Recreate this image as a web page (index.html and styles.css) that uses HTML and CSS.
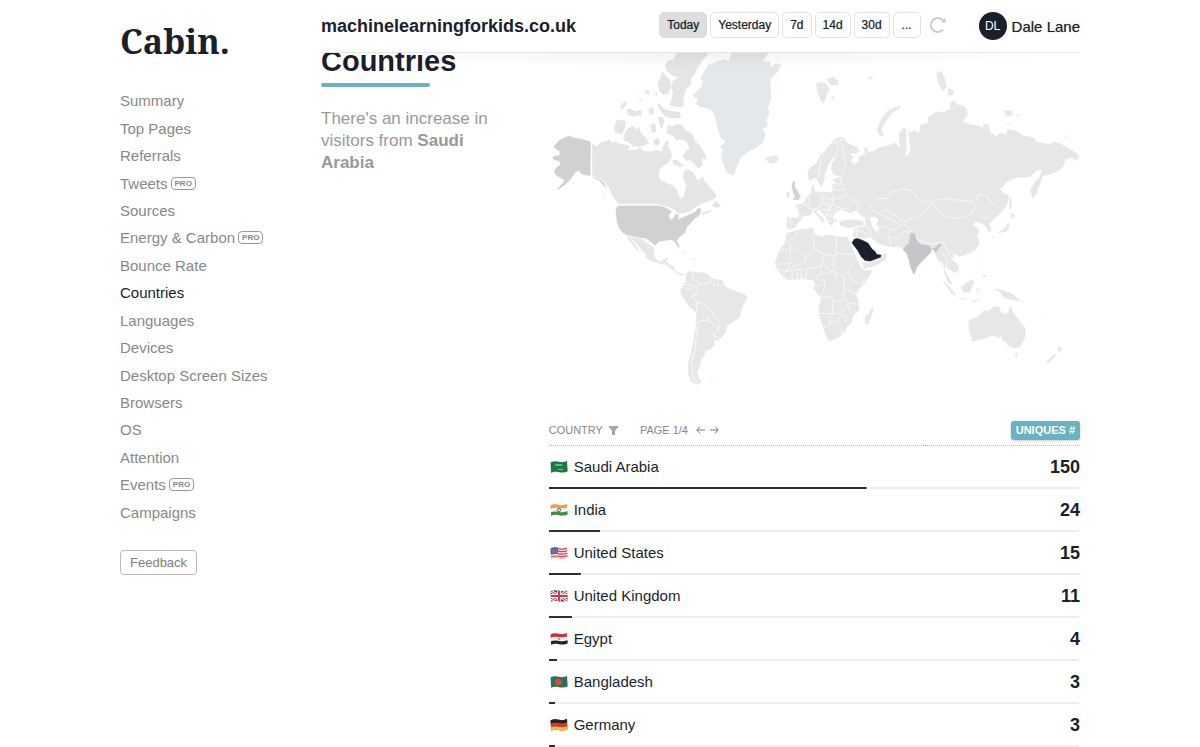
FILE: index.html
```html
<!DOCTYPE html>
<html lang="en">
<head>
<meta charset="utf-8">
<meta name="viewport" content="width=device-width, initial-scale=1">
<title>Cabin – machinelearningforkids.co.uk</title>
<link rel="stylesheet" href="styles.css">
</head>
<body>
<div class="page">
  <aside class="sidebar">
    <a class="logo" href="#">Cabin.</a>
    <nav>
      <ul class="nav-list">
        <li><a href="#">Summary</a></li>
        <li><a href="#">Top Pages</a></li>
        <li><a href="#">Referrals</a></li>
        <li><a href="#">Tweets</a><span class="pro">PRO</span></li>
        <li><a href="#">Sources</a></li>
        <li><a href="#">Energy &amp; Carbon</a><span class="pro">PRO</span></li>
        <li><a href="#">Bounce Rate</a></li>
        <li><a class="current" href="#">Countries</a></li>
        <li><a href="#">Languages</a></li>
        <li><a href="#">Devices</a></li>
        <li><a href="#">Desktop Screen Sizes</a></li>
        <li><a href="#">Browsers</a></li>
        <li><a href="#">OS</a></li>
        <li><a href="#">Attention</a></li>
        <li><a href="#">Events</a><span class="pro">PRO</span></li>
        <li><a href="#">Campaigns</a></li>
      </ul>
    </nav>
    <button class="feedback" type="button">Feedback</button>
  </aside>

  <main class="main">
    <header class="topbar">
      <h1 class="site">machinelearningforkids.co.uk</h1>
      <div class="periods">
        <button class="period active" type="button">Today</button>
        <button class="period" type="button">Yesterday</button>
        <button class="period" type="button">7d</button>
        <button class="period" type="button">14d</button>
        <button class="period" type="button">30d</button>
        <button class="period more" type="button">...</button>
        <button class="refresh" type="button" aria-label="Refresh">
          <svg width="18" height="18" viewBox="0 0 18 18" fill="none" stroke="#c8c8c8" stroke-width="1.800"><path d="M14.300 13.500A7 7 0 1 1 14 4.200"/><path d="M16.500 2V6.500H11.500z" fill="#c8c8c8" stroke="none"/></svg>
        </button>
      </div>
      <a class="account" href="#"><span class="avatar">DL</span>Dale Lane</a>
    </header>

    <section class="report">
      <div class="intro">
        <h2>Countries</h2>
        <p>There's an increase in visitors from <strong>Saudi Arabia</strong></p>
      </div>
      <div class="data">
        <svg class="map" viewBox="549 44 531 346" role="img" aria-label="World map of visitors">
          <g transform="translate(540 50) scale(.33333)">
            <path class="us" d="M153 276L140 270 118 265 100 262 86 256 70 264 58 270 45 284 40 290 52 300 60 306 56 316 46 316 36 322 42 330 58 334 60 344 48 352 42 362 46 374 58 382 66 386 72 390 66 400 52 416 48 422 60 416 76 404 88 392 98 380 106 368 116 362 122 370 136 376 152 378z"/>
            <path class="us" d="M96 398l6-4-2 8zM154 378l14 4 16 8 10 12 8 18-12-14-12-14-16-8zM188 428l6 4-4 2z"/>
            <path class="ca" d="M156 278L170 288 184 276 200 272 208 266 215 278 225 274 240 282 262 284 272 294 262 298 290 298 300 290 310 302 330 304 350 300 365 304 368 290 376 274 388 268 384 290 392 300 396 318 388 336 372 346 360 358 356 372 360 388 374 396 390 402 402 408 412 420 416 436 422 446 430 440 434 424 438 408 432 394 428 380 432 364 440 356 452 362 462 368 468 384 476 390 488 378 494 394 504 404 514 416 526 430 530 440 520 448 500 456 478 464 460 476 446 486 428 492 412 490 404 480 388 472 366 466 350 462 236 462 226 450 214 434 206 412 190 394 172 382 156 376z"/>
            <path class="ca" d="M414 0L506 0 504 12 494 24 480 42 470 60 462 76 450 90 456 100 440 116 434 134 430 150 432 170 410 172 388 166 394 150 398 130 392 110 400 90 414 84 396 76 380 64 374 44 386 30 400 28zM366 60L376 76 390 90 394 110 386 130 370 136 358 124 352 100 360 84zM350 160L362 164 372 176 390 182 420 186 424 204 390 206 372 198 354 172z"/>
            <path class="ca" d="M382 224L400 228 410 220 426 226 440 244 456 250 466 274 480 286 500 320 496 330 486 324 488 344 476 356 460 340 450 330 440 334 426 318 440 300 448 296 440 276 424 268 410 272 398 258 380 250zM262 236L280 226 290 240 296 228 304 250 318 262 328 280 314 286 296 290 276 290 268 278 250 272 252 252zM230 208L258 212 256 232 246 254 222 246 224 226z"/>
            <path class="ca" d="M260 176L272 176 284 184 306 178 304 196 280 200 262 194zM240 176L244 162 260 152 258 166 246 178zM312 116L326 122 330 138 316 128zM280 124l8 2-4 6zM324 178L340 170 342 192 330 196zM330 222L346 222 350 244 336 250zM352 200L368 200 374 216 364 240 358 222zM338 270L356 262 360 282 344 288zM296 144l10 4-6 4zM396 330L412 330 432 346 420 352 398 342zM514 468L528 450 534 460 544 470 530 474zM480 490L510 480 514 486 488 494zM344 128l10 2-4 12z"/>
            <path class="us" d="M234 466L352 466 372 470 388 478 396 484 388 494 390 508 400 504 406 490 418 496 414 508 436 498 452 490 466 484 474 474 484 476 482 488 474 500 462 508 452 520 440 532 436 548 420 560 410 572 416 582 420 596 414 592 404 576 394 570 376 572 356 576 346 588 334 578 318 566 300 564 280 560 262 556 250 550 238 536 230 516 228 496 226 478z"/>
            <path class="gl" d="M520 40L530 34 545 30 556 26 566 34 574 10 576 0 684 0 684 12 668 34 690 34 694 52 704 40 722 42 722 52 712 66 700 80 690 90 692 110 694 140 690 160 684 170 688 190 680 210 684 226 668 238 676 250 674 262 668 280 650 292 630 302 612 314 600 328 590 350 582 376 570 374 558 362 548 340 542 316 548 300 540 290 556 275 540 262 534 240 528 216 520 190 510 178 480 172 466 160 474 150 456 136 470 124 484 110 488 95 480 85 494 60 504 44z"/>
            <path class="gl" d="M672 320L684 322 690 318 712 316 716 328 700 342 684 338 678 328z"/>
          </g>
          <g transform="translate(600 200) scale(.33333)">
            <path class="land" d="M78 106L100 112 125 116 140 128 162 140 162 158 168 176 180 184 192 176 206 170 200 186 212 194 222 198 224 210 236 218 252 222 254 226 240 226 226 216 212 206 196 196 176 190 158 184 140 176 134 160 116 140 100 122 92 114 112 142 120 158 104 144 92 128zM236 150L250 156 268 168 252 162zM274 174L292 176 280 180zM330 526l10 2-6 4z"/>
            <path class="land" d="M256 222L268 212 284 216 310 216 326 224 334 234 350 236 368 240 376 258 400 270 430 280 442 290 436 306 426 322 420 352 400 366 382 376 378 396 362 414 352 424 342 420 344 436 334 446 318 452 312 466 304 480 300 500 292 516 296 530 306 548 290 554 272 544 264 520 264 490 272 460 280 420 286 380 288 350 288 336 270 324 256 304 244 286 240 272 248 256 256 244z"/>
            <path class="borders" d="M246 262L262 264 276 268 286 278 276 290 290 306 290 336M290 306L304 308 316 318 330 326 342 344 334 352 326 360 300 362 290 366M322 346L326 360 344 376 356 380 354 392 340 400 344 418M340 346L358 368 356 382M340 404L360 416M294 364L290 400 284 450 274 490 280 530 290 546M276 216L278 232 284 242 298 246 304 256 316 250 334 246 336 232M340 240L344 256 376 254M354 236L356 254M256 252L272 256 290 262 292 280 276 290M184 182L196 190 206 200M298 246L290 262"/>
          </g>
          <g transform="translate(770 200) scale(.33333)">
            <path class="land" d="M48 98L60 96 78 90 100 86 124 84 132 86 130 96 138 104 156 110 168 104 182 104 200 108 232 110 242 132 250 150 258 170 270 196 282 210 306 208 300 228 284 248 266 268 258 284 266 304 268 330 250 346 244 370 230 380 226 396 210 410 190 420 176 424 168 410 158 380 148 350 144 326 150 306 150 290 138 278 130 264 134 248 126 238 112 240 98 236 80 238 54 240 36 228 20 208 14 190 20 170 30 146 44 128zM306 320L310 330 302 352 294 374 284 372 284 352 294 340z"/>
            <path class="land" d="M276 188L300 186 332 174 338 162 350 158 348 176 330 190 300 202 280 208z"/>
            <path class="borders" d="M78 90L80 106 50 128M30 150L60 148 60 130M60 148L62 190 18 192M64 132L108 172M130 100L132 146 160 162 190 168M132 146L108 172 104 188 66 200 62 206M160 160L156 198 140 200 110 206M198 108L198 160 252 162M196 160L188 190 194 216M156 200L150 218 138 240M110 204L108 238M60 190L50 214M80 206L82 236M66 212L66 238M92 214L94 236M20 206L50 214 80 206 104 212M36 226L50 212M150 222L190 214 222 228M164 198L188 214M194 216L200 236M222 228L234 210 252 186M234 212L244 240 270 250 300 228M222 228L222 262 220 290M222 262L256 282M150 240L164 238 164 262 150 290M150 290L186 292 190 306 220 300M130 256L150 256M220 290L236 310 268 312M190 306L186 340 148 340M186 340L204 342 222 330 232 310M180 342L178 376 162 382M178 366L200 366 214 346 228 350 228 370M234 316L242 340M208 396L216 390 220 398 210 404z"/>
            <path class="top" d="M244 128L252 116 262 114 278 120 294 128 306 146 316 154 320 162 334 164 332 172 300 184 284 182 272 170 262 152z"/>
          </g>
          <g transform="translate(770 50) scale(.33333)">
            <path class="land" d="M230 278L262 290 270 304 256 312 240 310 250 320 244 334 252 342 264 334 268 318 284 314 280 296 290 290 294 306 310 302 326 292 350 286 376 278 388 292 386 250 398 232 408 236 408 270 410 300 404 318 416 312 420 290 416 262 414 240 424 248 430 240 446 248 450 224 472 218 474 200 500 184 520 186 540 176 540 160 550 150 560 162 582 168 592 180 592 196 578 214 600 222 630 228 636 234 640 222 654 222 662 250 680 258 690 246 706 254 712 236 740 242 760 256 790 262 800 276 840 282 850 274 870 280 900 296 928 316 920 332 900 324 886 328 880 350 860 366 840 374 818 378 810 400 800 430 786 446 780 420 790 400 806 384 814 360 800 362 780 380 760 384 740 382 710 396 690 418 700 428 716 436 712 460 700 480 690 492 670 508 658 520 664 540 656 548 646 530 634 520 616 516 610 526 624 534 628 546 620 556 628 578 616 600 600 608 580 616 566 620 552 612 546 626 566 646 568 660 552 670 546 664 530 654 526 640 524 660 536 680 546 700 540 704 530 690 522 670 520 650 516 636 504 634 498 620 490 604 480 606 462 630 440 650 430 650 420 650 410 610 398 600 390 590 370 592 356 590 340 586 320 578 306 566 296 562 284 566 250 562 248 560 252 534 284 528 286 510 270 494 256 482 240 490 210 478 200 486 190 498 190 506 204 512 190 516 186 530 176 520 166 500 148 480 140 484 150 496 164 510 158 520 148 504 134 490 126 484 118 496 100 500 92 512 84 518 76 532 64 538 50 534 50 500 84 502 86 482 78 470 76 464 100 460 110 440 122 430 124 410 132 404 134 424 160 424 184 426 188 410 184 402 200 400 186 388 210 380 190 374 182 360 184 340 192 330 196 316 180 336 166 370 160 400 152 412 142 392 136 384 116 392 112 366 120 352 140 338 150 316 172 290 190 268 210 260 222 264z"/>
            <path class="land" d="M206 516L230 508 260 508 280 514 280 526 260 530 240 534 222 532 210 528zM138 100L150 96 164 98 180 116 170 136 160 162 150 150 140 124zM168 88L186 80 206 92 204 106 180 106zM184 134L194 144 184 150zM292 78L304 80 314 74 300 90zM392 166L372 172 350 184 330 210 320 240 330 260 342 256 334 240 346 216 366 190 388 176zM498 70L514 62 526 90 530 112 518 124 502 98zM534 112L552 124 550 134 532 138zM698 182L722 180 730 194 710 200zM738 190L754 198 742 200zM706 220L714 218 724 226zM882 258L894 254 888 262zM718 432L724 450 724 474 718 480 716 456zM50 426L60 424 58 440 48 444z"/>
            <path class="land" d="M720 484L736 498 724 506zM714 516L718 530 708 546 690 548 676 552 690 542 704 534zM664 554L670 560 666 566zM572 600l4 2-6 4zM624 600l4 4-4 8zM624 630L628 640 624 648zM640 670L648 680 638 682zM516 688L530 700 556 730 554 738 540 726zM556 740L590 746 582 750zM594 748l20 2 16-2-16 8zM570 712L594 694 606 686 612 694 606 710 600 726 580 728zM618 716L630 714 622 722 630 732 620 728zM668 714L690 718 710 724 730 732 752 754 730 750 716 748 700 742 690 728zM444 670L450 680 446 684zM818 806l6 4-6 0z"/>
            <path class="land" d="M594 812L620 800 640 782 656 782 670 768 690 768 688 780 706 792 716 782 720 764 728 784 740 800 752 816 766 836 766 860 756 880 748 892 730 894 712 886 706 874 694 870 694 858 684 864 670 856 640 866 620 872 606 876 602 860 596 840zM732 910L744 908 738 924zM860 880L866 890 878 894 866 910 862 898zM850 912L858 916 840 934 830 942 828 934z"/>
            <path class="ca" d="M84 474L100 468 112 462 118 450 112 436 120 430 148 432 154 446 148 458 154 468 126 480 122 496 100 498 88 496z"/>
            <path class="sea" d="M300 504L314 500 324 510 318 524 328 540 316 544 306 528z"/>
            <path class="borders" d="M298 468L320 446 352 444 362 426 396 416 430 424 444 446 470 456 486 456 500 450 530 446 560 450 600 454 620 448 624 432 650 436 664 460 680 470M490 460L500 480 530 500 560 506 600 494 616 470 600 456M298 468L310 484 330 490 360 510M330 486L350 480 380 500 400 514 440 500 470 480 486 456M324 530L345 530 360 540 380 536 400 520 414 530 424 548M350 500L390 524M360 540L356 560 364 584M356 560L380 566 400 544 420 546M436 566L480 582 520 576 530 600 548 612M286 520L296 536 304 566M250 540L280 544 290 560M262 536L258 560M518 606L530 630 536 650M530 604L552 636M276 500L306 508M640 508L660 500"/>
            <path class="borders" d="M184 426L190 446 188 462 200 470 240 480M262 482L264 458 240 446 230 436 214 400 212 380M190 446L214 444 230 436M188 408L214 400M186 418L204 420 222 418M156 424L156 444 190 450M156 444L160 458 188 462M118 436L120 460 110 470 128 480 150 470 160 458M128 484L160 478 190 480M160 478L176 500 190 500M84 502L104 500M62 500L62 534M200 470L196 490 174 494M100 464L118 460M164 466L184 466 170 484M188 462L176 480M212 268L218 300 228 350 214 372M192 270L206 290 196 316M212 270L196 276 178 282 160 310 150 340 144 384M170 492L166 504M184 512L172 512"/>
            <path class="uk" d="M68 392L76 396 74 408 84 424 92 440 86 450 66 450 74 440 68 428 64 408z"/>
            <path class="india" d="M420 546L436 550 438 566 450 580 480 586 484 596 496 590 510 578 516 584 504 598 496 610 490 598 482 600 484 608 478 612 460 630 440 652 436 668 430 674 420 650 410 612 398 600 402 590 414 580z"/>
          </g>
        </svg>

        <table class="countries">
          <thead>
            <tr>
              <th scope="col">
                <div class="heading">
                  <span>COUNTRY</span>
                  <svg class="filter" width="9" height="10" viewBox="0 0 9 10" aria-hidden="true"><path fill="#a5a5a5" d="M0 1H9V3H0zM1 3H8L6 6V10H3V6z"/></svg>
                  <span class="pages">PAGE 1/4</span>
                  <button class="arrow" type="button" aria-label="Previous page"><svg width="9" height="8" viewBox="0 0 9 8"><path d="M4 .7L.8 4 4 7.300M1 4H9"/></svg></button>
                  <button class="arrow" type="button" aria-label="Next page"><svg width="9" height="8" viewBox="0 0 9 8"><path d="M5 .7L8.200 4 5 7.300M8 4H0"/></svg></button>
                </div>
              </th>
              <th scope="col" class="num"><button class="uniques" type="button">UNIQUES #</button></th>
            </tr>
          </thead>
          <tbody>
            <tr style="--share:59.8%">
              <td><svg class="flag" viewBox="0 0 18 14"><defs><clipPath id="wave"><path d="M.5 2.500C4 1 6 1.200 9 1.800S14 2.600 17 .8L17.700 11.200C14.500 13 12 12.700 9 12.200S4 11.500 1.200 13z"/></clipPath></defs><g clip-path="url(#wave)"><path fill="#1c7a46" d="M0 0h18v14H0z"/><path d="M5 4.500l1 1.500 1-2 1 2 1-2 1 2 1-2 1 2M8 9.500h5" stroke="#b5d8be" stroke-width=".7" fill="none"/></g></svg>Saudi Arabia</td>
              <td class="num">150</td>
            </tr>
            <tr style="--share:9.6%">
              <td><svg class="flag" viewBox="0 0 18 14"><g clip-path="url(#wave)"><path fill="#f4f2ee" d="M0 0h18v14H0z"/><path fill="#ee9d45" d="M0 0h18v4Q14 6 9 5T0 6z"/><path fill="#3c8c3d" d="M0 9.500Q5 8 9 9t9-1v6H0z"/><circle cx="9" cy="7" r="1.600" fill="none" stroke="#4a5a95" stroke-width=".9"/></g></svg>India</td>
              <td class="num">24</td>
            </tr>
            <tr style="--share:6%">
              <td><svg class="flag" viewBox="0 0 18 14"><g clip-path="url(#wave)"><path fill="#f0e6e8" d="M0 0h18v14H0z"/><path d="M0 3.500Q5 2 9 2.800T18 2M0 6Q5 4.500 9 5.300T18 4.500M0 8.500Q5 7 9 7.800T18 7M0 11Q5 9.500 9 10.300T18 9.500M0 13.300Q5 11.500 9 12.500T18 12" stroke="#cf4a50" stroke-width="1.200" fill="none"/><path fill="#4b5f9b" d="M0 0h8v7.500Q5 7 0 8.500z"/><path d="M1.500 4h6M2 6h5" stroke="#c8cfe4" stroke-width=".7" stroke-dasharray="1 1"/></g></svg>United States</td>
              <td class="num">15</td>
            </tr>
            <tr style="--share:4.4%">
              <td><svg class="flag" viewBox="0 0 18 14"><g clip-path="url(#wave)"><path fill="#34477f" d="M0 0h18v14H0z"/><path d="M0 1.500L18 12.500M0 12.500L18 1.500" stroke="#f1edf0" stroke-width="2.800"/><path d="M0 1.500L18 12.500M0 12.500L18 1.500" stroke="#cf3a45" stroke-width="1"/><path d="M9 0V14M0 7H18" stroke="#f1edf0" stroke-width="4"/><path d="M9 0V14M0 7H18" stroke="#cf3a45" stroke-width="2.200"/></g></svg>United Kingdom</td>
              <td class="num">11</td>
            </tr>
            <tr style="--share:1.6%">
              <td><svg class="flag" viewBox="0 0 18 14"><g clip-path="url(#wave)"><path fill="#f2f0ee" d="M0 0h18v14H0z"/><path fill="#cb3038" d="M0 0h18v4Q14 6 9 5T0 6z"/><path fill="#222" d="M0 9.500Q5 8 9 9t9-1v6H0z"/><circle cx="9" cy="7" r="1.200" fill="#c7a45a"/></g></svg>Egypt</td>
              <td class="num">4</td>
            </tr>
            <tr style="--share:1.2%">
              <td><svg class="flag" viewBox="0 0 18 14"><g clip-path="url(#wave)"><path fill="#2b7058" d="M0 0h18v14H0z"/><circle cx="8.500" cy="7" r="3.300" fill="#dc4a3d"/></g></svg>Bangladesh</td>
              <td class="num">3</td>
            </tr>
            <tr style="--share:1.2%">
              <td><svg class="flag" viewBox="0 0 18 14"><g clip-path="url(#wave)"><path fill="#d23a2c" d="M0 0h18v14H0z"/><path fill="#252323" d="M0 0h18v4Q14 6 9 5T0 6z"/><path fill="#f2bd3c" d="M0 9.500Q5 8 9 9t9-1v6H0z"/></g></svg>Germany</td>
              <td class="num">3</td>
            </tr>
          </tbody>
        </table>
      </div>
    </section>
  </main>
</div>
</body>
</html>
```
FILE: styles.css
```css
* { box-sizing: border-box; }

body {
  margin: 0;
  background: #fff;
  color: #1a1f2b;
  font-family: "Liberation Sans", Arial, sans-serif;
  font-size: 15px;
}

a { color: inherit; text-decoration: none; }
button { font-family: inherit; color: inherit; cursor: pointer; }

.page {
  display: grid;
  grid-template-columns: 201px minmax(0, 1fr);
  max-width: 960px;
  margin: 0 auto;
}

/* Sidebar */
.sidebar { padding-top: 18px; }

.logo {
  display: block;
  margin-bottom: 23px;
  font-family: "Noto Serif", "DejaVu Serif Condensed", "DejaVu Serif", serif;
  font-size: 34px;
  font-weight: 700;
  line-height: 46px;
}

.nav-list {
  display: grid;
  grid-auto-rows: 1fr;
  min-height: 439px;
  margin: 0;
  padding: 0;
  list-style: none;
  color: #888;
}

.nav-list li { display: flex; align-items: center; gap: 3px; }
.nav-list .current { color: #1a1f2b; }

.pro {
  padding: 0 3px;
  border: 1px solid #999;
  border-radius: 4px;
  font-size: 8px;
  font-weight: 700;
  line-height: 11px;
}

.feedback {
  margin-top: 24px;
  padding: 0 9px;
  border: 1px solid #bbb;
  border-radius: 4px;
  background: #fff;
  color: #808080;
  font-size: 13px;
  line-height: 23px;
}

/* Top bar */
.topbar {
  position: sticky;
  top: 0;
  z-index: 2;
  display: flex;
  align-items: center;
  height: 53px;
  border-bottom: 1px solid #e6e6e6;
  background: #fff;
}

.topbar::after {
  content: "";
  position: absolute;
  top: 100%;
  left: 0;
  right: 0;
  height: 14px;
  margin-top: 1px;
  background: radial-gradient(ellipse 50% 100% at 50% 0, rgba(0, 0, 0, .05), transparent);
  pointer-events: none;
}

.site { margin: 0 auto 0 0; font-size: 18px; line-height: 24px; }

.periods { display: flex; align-items: center; gap: 3px; margin-top: -2px; }

.period {
  height: 26px;
  padding: 0 7px;
  border: 1px solid #e2e2e2;
  border-radius: 5px;
  background: #fff;
  font-size: 12px;
  text-shadow: 0 0 1px rgba(26, 31, 43, .5);
}

.period.active { border-color: #dcdcdc; background: #dedede; }
.period.more { padding: 0 8px; }

.refresh {
  display: flex;
  margin-left: 5px;
  padding: 0;
  border: 0;
  background: none;
}

.account {
  display: flex;
  align-items: center;
  gap: 5px;
  margin-left: 32px;
  text-shadow: 0 0 1px rgba(26, 31, 43, .5);
}

.avatar {
  width: 28px;
  border-radius: 50%;
  background: #1a1f2b;
  color: #fff;
  font-size: 12px;
  line-height: 28px;
  text-align: center;
}

/* Report */
.report {
  display: grid;
  grid-template-columns: 3fr 7fr;
  margin-top: -9px;
}

.intro { padding-right: 36px; }

.intro h2 {
  margin: 0;
  font-size: 29px;
  line-height: 34px;
}

.intro h2::after {
  content: "";
  display: block;
  width: 109px;
  height: 4px;
  margin-top: 5px;
  border-radius: 2px;
  background: #6cb1c1;
}

.intro p {
  margin: 21px 0 0;
  color: #999;
  font-size: 17px;
  line-height: 22px;
}

.map { display: block; width: 100%; margin-bottom: 25px; }
.map path { stroke: #fff; stroke-width: 1; }
.map .land { fill: #e6e7e9; }
.map .ca { fill: #e5e5e5; }
.map .gl { fill: #e5e8ea; }
.map .us { fill: #cfd1d3; }
.map .uk { fill: #d2d4d6; }
.map .india { fill: #c4c6c9; }
.map .top { fill: #1a1f2b; }
.map .sea { fill: #fff; }
.map .borders { fill: none; stroke-width: 2; }

/* Countries table */
.countries { width: 100%; border-spacing: 0; }

.countries th {
  height: 31px;
  padding: 0;
  border-bottom: 1px dotted #bbb;
  color: #888;
  font-size: 11px;
  font-weight: 400;
  text-align: left;
}

.heading { display: flex; align-items: center; gap: 6px; }
.pages { margin-left: 16px; margin-right: 2px; }
.arrow { display: flex; padding: 0; border: 0; background: none; }
.arrow + .arrow { margin-left: -1px; }
.arrow path { fill: none; stroke: #777; stroke-width: 1; }

.countries .num { text-align: right; }

.uniques {
  padding: 0 5px;
  border: 0;
  border-radius: 3px;
  background: #6ab1c2;
  box-shadow: 0 1px 3px rgba(0, 0, 0, .2);
  color: #fff;
  font-size: 11px;
  font-weight: 700;
  line-height: 19px;
}

.countries tbody tr {
  background:
    linear-gradient(#2b2f3b, #2b2f3b) left bottom / var(--share) 2px no-repeat,
    linear-gradient(#eee, #eee) left bottom / 100% 2px no-repeat;
}

.countries td { height: 43px; padding: 0 0 2px; }
.countries td.num { padding: 0; font-size: 18px; font-weight: 700; }

.flag {
  width: 18px;
  height: 14px;
  margin: 0 6px 0 1px;
  vertical-align: -2px;
}
```
